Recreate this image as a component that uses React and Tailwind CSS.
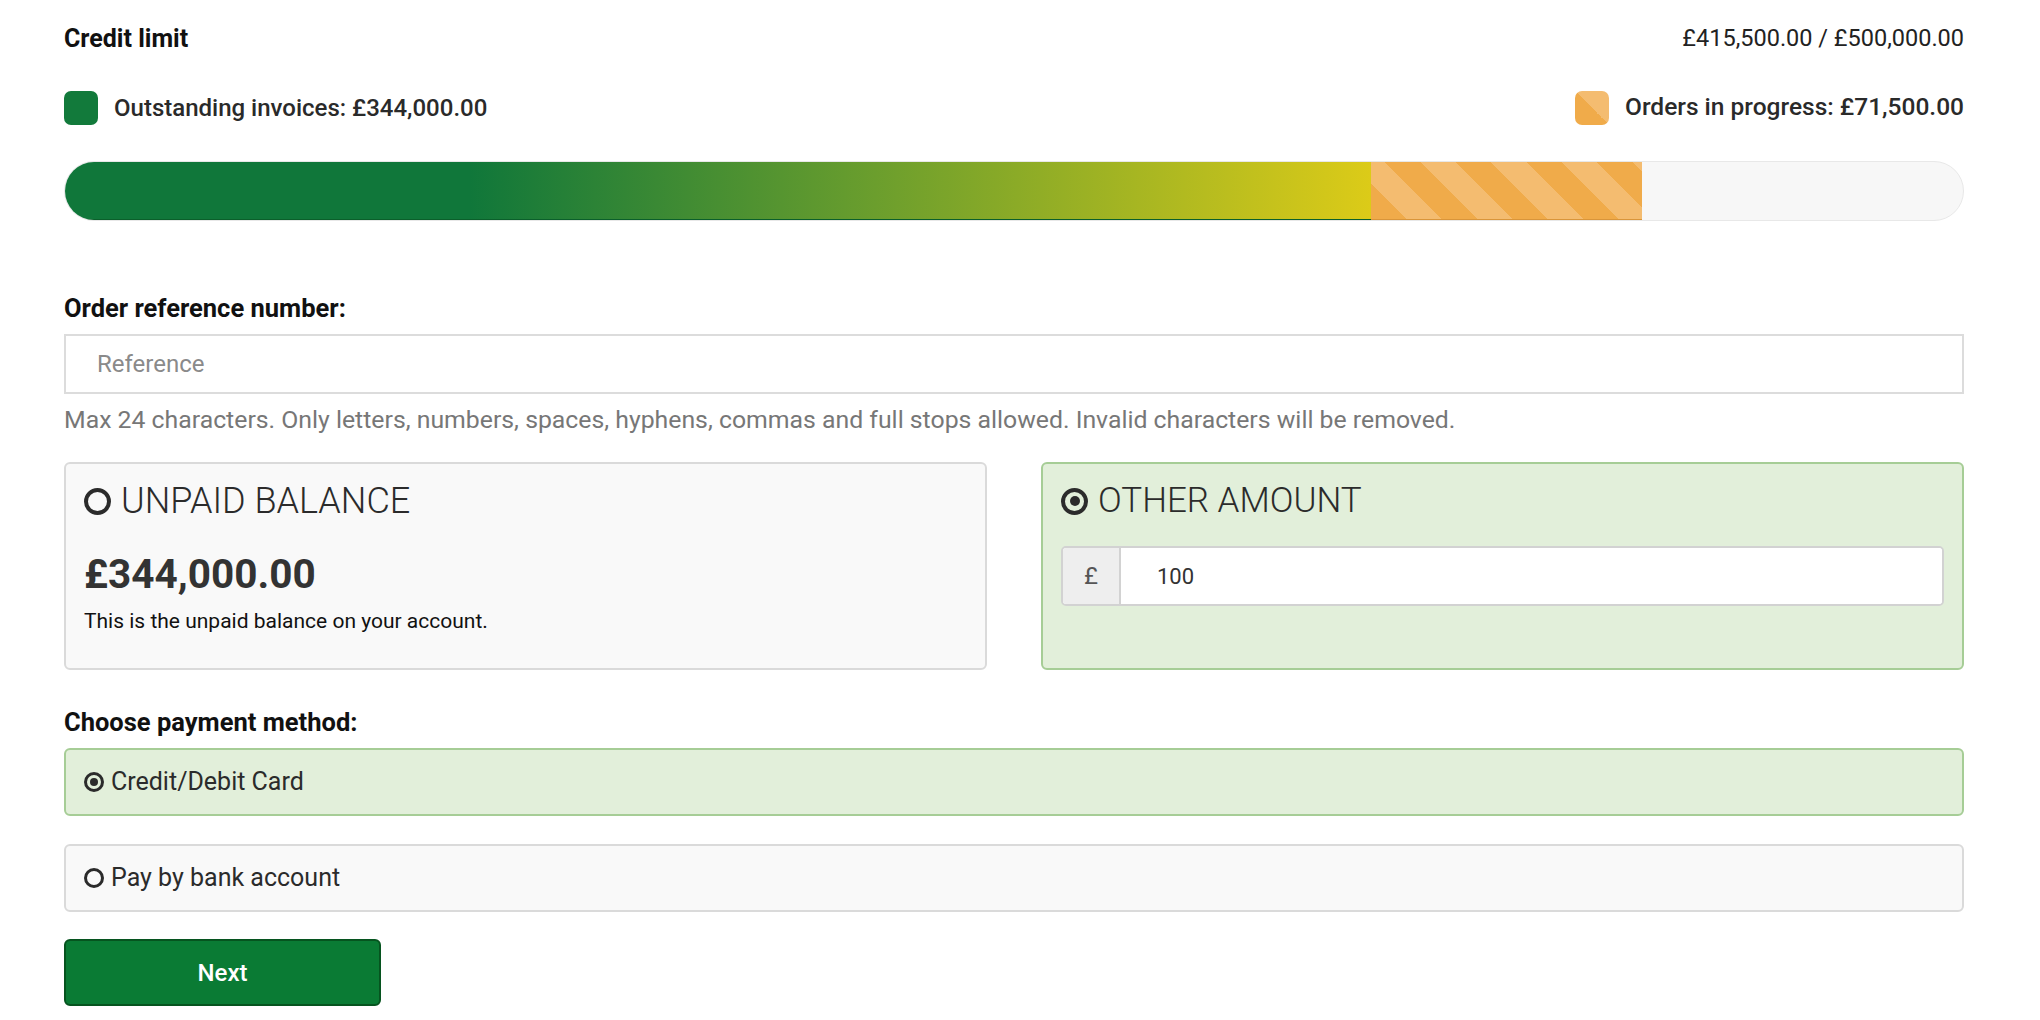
const LIMIT = 500000;
const OUTSTANDING = 344000;
const IN_PROGRESS = 71500;

function Radio({ checked, size = "lg" }) {
  const box = size === "lg" ? "w-[27px] h-[27px] border-[4px]" : "w-[20px] h-[20px] border-[3px]";
  const dot = size === "lg" ? "w-[10px] h-[10px]" : "w-[8px] h-[8px]";
  return (
    <span className={`${box} shrink-0 rounded-full border-[#2b2b2b] flex items-center justify-center`}>
      {checked && <span className={`${dot} rounded-full bg-[#2b2b2b]`} />}
    </span>
  );
}

function CreditBar() {
  const used = (OUTSTANDING / LIMIT) * 100;
  const pending = (IN_PROGRESS / LIMIT) * 100;
  return (
    <div className="mt-[36px] h-[60px] w-full rounded-full overflow-hidden flex bg-[#f7f7f7] border border-[#e8e8e8]">
      <div
        className="h-full border-b border-[#0b5f2b] bg-[linear-gradient(to_right,#10773a_0%,#10773a_31%,#6b9e2d_62%,#dccb18_100%)]"
        style={{ width: `${used}%` }}
      />
      <div
        className="h-full border-b border-[#d9953a] bg-[repeating-linear-gradient(45deg,#f0ab4a_0_25px,#f4bc70_25px_50px)]"
        style={{ width: `${pending}%` }}
      />
    </div>
  );
}

export default function App() {
  return (
    <div className="min-h-screen bg-white pl-16 pr-[76px] pt-[23px] font-['Roboto',sans-serif] text-[#222]">
      <div className="flex items-center justify-between h-8">
        <span className="text-[25px] font-bold text-[#111]">Credit limit</span>
        <span className="text-[23.5px] text-[#222]">£415,500.00 / £500,000.00</span>
      </div>

      <div className="mt-[35px] flex items-center justify-between h-[35px]">
        <div className="flex items-center gap-4">
          <span className="w-[34px] h-[34px] rounded-[7px] bg-[#127a3b]" />
          <span className="text-[24px] font-medium text-[#2a2a2a]">Outstanding invoices: £344,000.00</span>
        </div>
        <div className="flex items-center gap-4">
          <span className="w-[34px] h-[34px] rounded-[7px] bg-[linear-gradient(45deg,#f0ab4a_50%,#f4bc70_50%)]" />
          <span className="text-[24.5px] font-medium text-[#2a2a2a]">Orders in progress: £71,500.00</span>
        </div>
      </div>

      <CreditBar />

      <div className="mt-[71px] h-8 flex items-center text-[25.5px] font-bold text-[#111]">Order reference number:</div>
      <input
        className="mt-[10px] block w-full h-[60px] border-2 border-[#dcdcdc] px-[31px] text-[24px] text-[#333] placeholder:text-[#8a8a8a] outline-none"
        placeholder="Reference"
      />
      <p className="mt-[10px] h-8 leading-8 text-[24.8px] text-[#777]">
        Max 24 characters. Only letters, numbers, spaces, hyphens, commas and full stops allowed. Invalid characters will be removed.
      </p>

      <div className="mt-[26px] grid grid-cols-2 gap-[54px]">
        <div className="h-[208px] rounded-md border-2 border-[#dadada] bg-[#f9f9f9] px-[18px] pt-[17px]">
          <div className="flex items-center gap-[10px] h-[40px]">
            <Radio />
            <span className="text-[36px] font-light text-[#2b2b2b] leading-[40px]">UNPAID BALANCE</span>
          </div>
          <div className="mt-[29px] text-[40.5px] font-bold leading-[48px] text-[#333]">£344,000.00</div>
          <div className="mt-[9px] text-[21px] leading-7 text-[#111]">This is the unpaid balance on your account.</div>
        </div>

        <div className="h-[208px] rounded-md border-2 border-[#a6cd96] bg-[#e2efda] px-[18px] pt-[17px]">
          <div className="flex items-center gap-[10px] h-[40px]">
            <Radio checked />
            <span className="text-[35px] font-light text-[#2b2b2b] leading-[40px]">OTHER AMOUNT</span>
          </div>
          <div className="mt-[25px] flex h-[60px] rounded-[5px] border-2 border-[#d2d2d2] overflow-hidden bg-white">
            <span className="w-[58px] shrink-0 flex items-center justify-center bg-[#eeeeee] border-r-2 border-[#d2d2d2] text-[24px] text-[#555]">£</span>
            <input
              className="flex-1 px-[36px] text-[22px] text-[#333] outline-none bg-white"
              defaultValue="100"
            />
          </div>
        </div>
      </div>

      <div className="mt-[36px] h-8 flex items-center text-[25.5px] font-bold text-[#111]">Choose payment method:</div>

      <label className="mt-[10px] flex items-center gap-[7px] h-[68px] rounded-md border-2 border-[#a6cd96] bg-[#e2efda] px-[18px] cursor-pointer">
        <Radio checked size="sm" />
        <span className="text-[25px] text-[#2b2b2b]">Credit/Debit Card</span>
      </label>

      <label className="mt-[28px] flex items-center gap-[7px] h-[68px] rounded-md border-2 border-[#dadada] bg-[#f9f9f9] px-[18px] cursor-pointer">
        <Radio size="sm" />
        <span className="text-[25px] text-[#2b2b2b]">Pay by bank account</span>
      </label>

      <button className="mt-[27px] block w-[317px] h-[67px] rounded-md border-2 border-[#06541f] bg-[#0a7b34] text-[24px] font-medium text-white">
        Next
      </button>
    </div>
  );
}
